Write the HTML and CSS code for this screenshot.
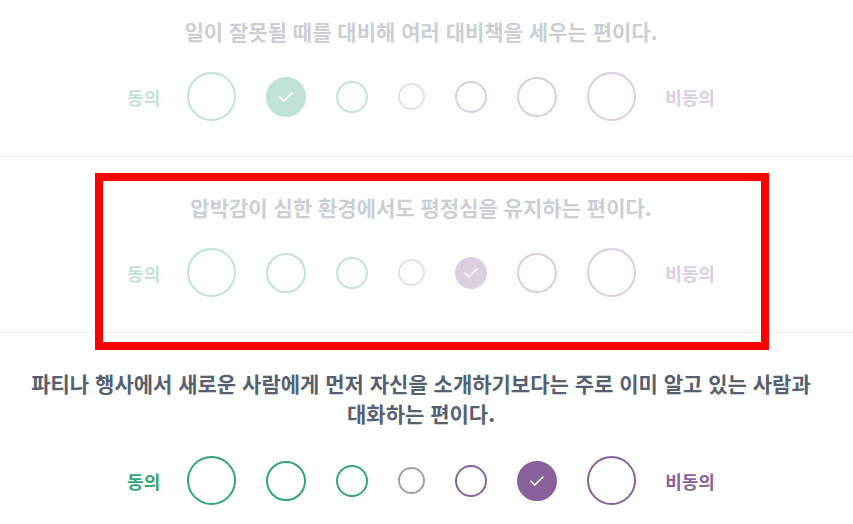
FILE: index.html
```html
<!DOCTYPE html>
<html lang="ko">
<head>
<meta charset="utf-8">
<title>성격 테스트</title>
<link rel="stylesheet" href="styles.css">
</head>
<body>
<main class="test">
  <section class="question faded">
    <div class="statement">일이 잘못될 때를 대비해 여러 대비책을 세우는 편이다.</div>
    <div class="options">
      <span class="label agree">동의</span>
      <span class="opt agree s1"></span>
      <span class="opt agree s2 checked"><svg viewBox="0 0 14 10"><path d="M1 5.2 L4.8 9 L13 1"/></svg></span>
      <span class="opt agree s3"></span>
      <span class="opt neutral s4"></span>
      <span class="opt disagree s3"></span>
      <span class="opt disagree s2"></span>
      <span class="opt disagree s1"></span>
      <span class="label disagree">비동의</span>
    </div>
  </section>
  <section class="question faded">
    <div class="statement">압박감이 심한 환경에서도 평정심을 유지하는 편이다.</div>
    <div class="options">
      <span class="label agree">동의</span>
      <span class="opt agree s1"></span>
      <span class="opt agree s2"></span>
      <span class="opt agree s3"></span>
      <span class="opt neutral s4"></span>
      <span class="opt disagree s3 checked"><svg viewBox="0 0 14 10"><path d="M1 5.2 L4.8 9 L13 1"/></svg></span>
      <span class="opt disagree s2"></span>
      <span class="opt disagree s1"></span>
      <span class="label disagree">비동의</span>
    </div>
  </section>
  <section class="question long">
    <div class="statement">파티나 행사에서 새로운 사람에게 먼저 자신을 소개하기보다는 주로 이미 알고 있는 사람과 대화하는 편이다.</div>
    <div class="options">
      <span class="label agree">동의</span>
      <span class="opt agree s1"></span>
      <span class="opt agree s2"></span>
      <span class="opt agree s3"></span>
      <span class="opt neutral s4"></span>
      <span class="opt disagree s3"></span>
      <span class="opt disagree s2 checked"><svg viewBox="0 0 14 10"><path d="M1 5.2 L4.8 9 L13 1"/></svg></span>
      <span class="opt disagree s1"></span>
      <span class="label disagree">비동의</span>
    </div>
  </section>
</main>
<div class="highlight"></div>
</body>
</html>
```
FILE: styles.css
```css
html, body {
  margin: 0;
  padding: 0;
  background: #ffffff;
  overflow: hidden;
}

body {
  font-family: "Noto Sans CJK KR", "Noto Sans", sans-serif;
  width: 853px;
  height: 524px;
  position: relative;
}

.test {
  margin-top: -19px;
}

.question {
  padding: 35px 11px 35px 0;
  border-bottom: 1px solid #ececec;
  display: flex;
  flex-direction: column;
  align-items: center;
}

.question:last-child {
  border-bottom: none;
}

.faded .statement,
.faded .options {
  opacity: 0.3;
}

.statement {
  font-size: 21px;
  font-weight: 700;
  line-height: 30px;
  color: #576071;
  text-align: center;
  max-width: 810px;
  word-break: keep-all;
}

.options {
  margin-top: 26px;
  display: flex;
  align-items: center;
  gap: 30px;
}

.long .options {
  margin-top: 28px;
}

.label {
  font-size: 18px;
  font-weight: 700;
  line-height: 24px;
}

.label.agree { color: #33a474; margin-right: -3px; }
.label.disagree { color: #88619a; margin-left: -1px; }

.opt {
  box-sizing: border-box;
  border-radius: 50%;
  border: 2px solid;
  display: flex;
  align-items: center;
  justify-content: center;
  flex: none;
}

.opt.agree { border-color: #33a474; }
.opt.neutral { border-color: #9ca0a8; }
.opt.disagree { border-color: #88619a; }

.s1 { width: 49px; height: 49px; }
.s2 { width: 40px; height: 40px; }
.s3 { width: 32px; height: 32px; }
.s4 { width: 27px; height: 27px; }

.opt.checked.agree { background: #33a474; }
.opt.checked.disagree { background: #88619a; }

.opt svg {
  width: 14px;
  height: 10px;
  fill: none;
  stroke: #ffffff;
  stroke-width: 1.6;
  stroke-linecap: round;
  stroke-linejoin: round;
}

.highlight {
  position: absolute;
  left: 95px;
  top: 173px;
  width: 674px;
  height: 177px;
  box-sizing: border-box;
  border: 8px solid #ff0000;
  pointer-events: none;
}
```
